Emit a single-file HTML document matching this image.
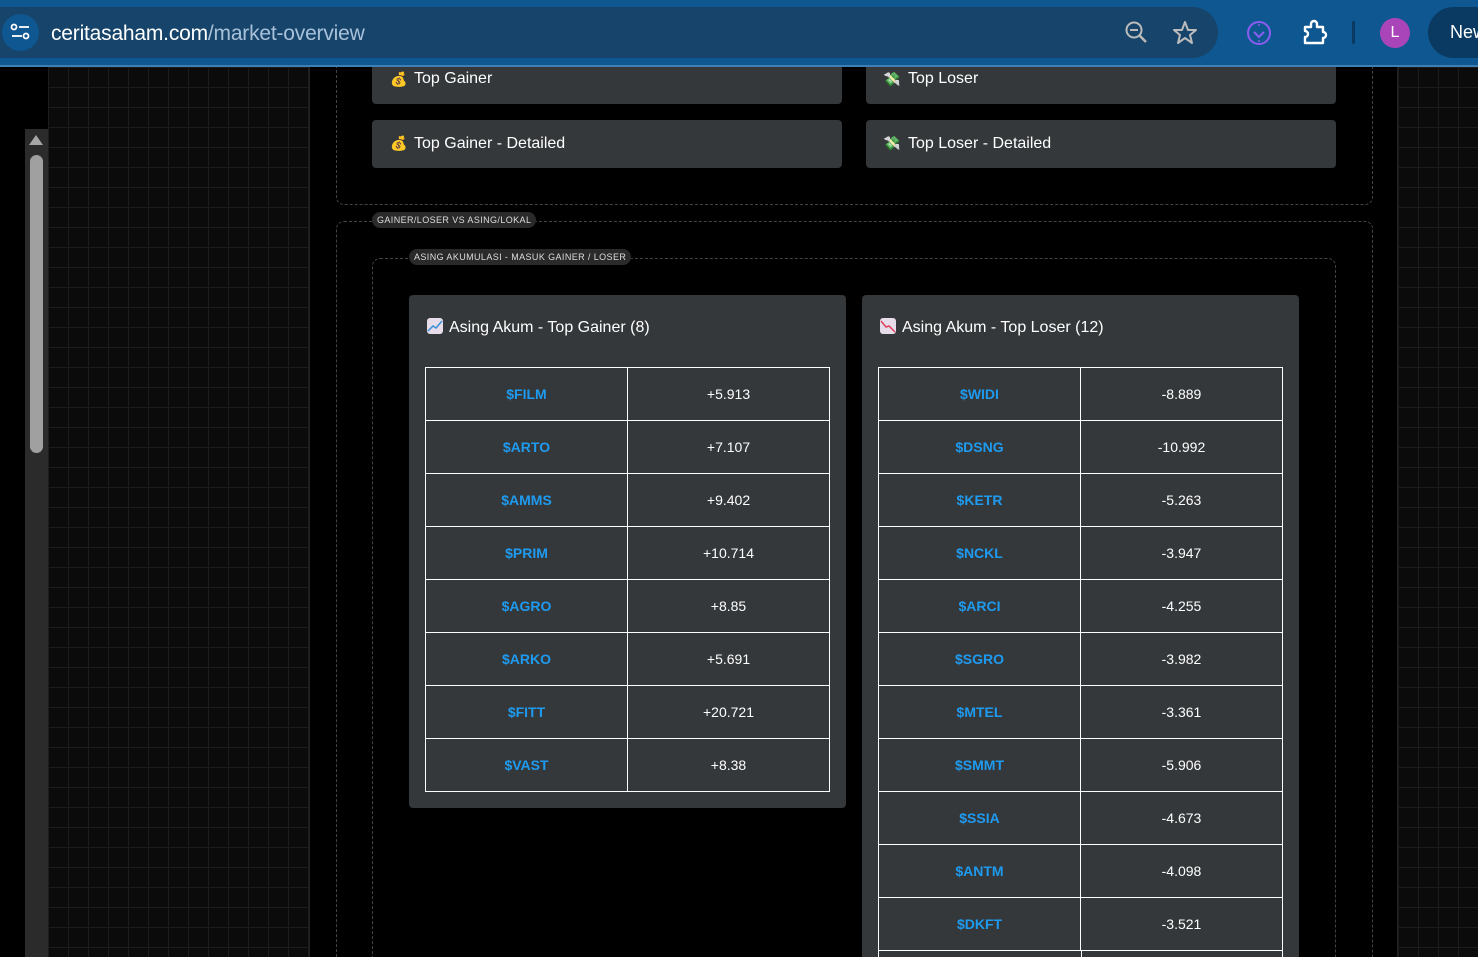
<!DOCTYPE html>
<html><head><meta charset="utf-8"><style>
*{margin:0;padding:0;box-sizing:border-box}
html,body{width:1478px;height:957px;overflow:hidden;background:#000}
body{font-family:"Liberation Sans",Arial,sans-serif}
#w{position:relative;width:1478px;height:957px;overflow:hidden}
.abs{position:absolute}
.bar{left:0;top:0;width:1478px;height:67px;background:#0f5790;border-bottom:2px solid #3f7fb4}
.pill{left:0;top:7px;width:1218px;height:51px;background:#16446b;border-radius:0 26px 26px 0}
.url{left:51px;top:22px;font-size:21px;color:#fff;letter-spacing:-0.2px}
.url span{color:#a9c1d8}
.grid{background-color:#0b0b0b;background-image:linear-gradient(#1c1c1c 1px,transparent 1px),linear-gradient(90deg,#1c1c1c 1px,transparent 1px);background-size:20px 20px}
.btn{background:#34383a;border-radius:4px;color:#fff;font-size:16px;padding-left:42px;line-height:48px}
.dash{border:1px dashed #444;border-radius:8px}
.leg{background:#2a2a2a;color:#ddd;font-size:9px;letter-spacing:.4px;border-radius:8px;height:16px;line-height:16px;padding:0 5px}
.card{background:#34383a;border-radius:4px}
.ttl{color:#fff;font-size:16px}
table{border-collapse:collapse;position:absolute}
td{border:1px solid #fff;height:53px;text-align:center;font-size:14px;color:#fff;width:50%}
td.t{color:#1e9bf0;font-weight:bold}
.ico{display:inline-block;width:16px;height:16px;border-radius:3px;background:#e6dcea;vertical-align:-2px;margin-right:6px;position:relative;overflow:hidden}
</style></head><body><div id="w">
<div class="abs grid" style="left:48px;top:67px;width:262px;height:890px;border-right:1px solid #222"></div>
<div class="abs grid" style="left:1397px;top:67px;width:81px;height:890px;border-left:1px solid #222"></div>
<div class="abs" style="left:25px;top:129px;width:23px;height:828px;background:#2b2b2b"></div>
<div class="abs" style="left:29px;top:135px;width:0;height:0;border-left:7px solid transparent;border-right:7px solid transparent;border-bottom:10px solid #a6a6a6"></div>
<div class="abs" style="left:30px;top:155px;width:13px;height:298px;background:#a0a0a0;border-radius:7px"></div>

<div class="abs dash" style="left:336px;top:67px;width:1037px;height:138px;border-top:none;border-radius:0 0 8px 8px"></div>
<div class="abs btn" style="left:372px;top:67px;width:470px;height:37px;line-height:24px;border-radius:0 0 4px 4px">Top Gainer</div>
<div class="abs" style="left:390px;top:71px;font-size:14px">💰</div>
<div class="abs btn" style="left:866px;top:67px;width:470px;height:37px;line-height:24px;border-radius:0 0 4px 4px">Top Loser</div>
<div class="abs" style="left:883px;top:71px;font-size:14px">💸</div>
<div class="abs btn" style="left:372px;top:120px;width:470px;height:48px;">Top Gainer - Detailed</div>
<div class="abs" style="left:390px;top:135px;font-size:14px">💰</div>
<div class="abs btn" style="left:866px;top:120px;width:470px;height:48px;">Top Loser - Detailed</div>
<div class="abs" style="left:883px;top:135px;font-size:14px">💸</div>

<div class="abs dash" style="left:336px;top:221px;width:1037px;height:736px;border-bottom:none;border-radius:8px 8px 0 0"></div>
<div class="abs leg" style="left:372px;top:212px">GAINER/LOSER VS ASING/LOKAL</div>
<div class="abs dash" style="left:372px;top:258px;width:964px;height:699px;border-bottom:none;border-radius:8px 8px 0 0"></div>
<div class="abs leg" style="left:409px;top:249px">ASING AKUMULASI - MASUK GAINER / LOSER</div>

<div class="abs card" style="left:409px;top:295px;width:437px;height:513px"></div>
<div class="abs ttl" style="left:427px;top:318px"><span class="ico"><svg width="16" height="16"><path d="M1 13 L6 8 L9 10 L15 3" stroke="#3a8fd8" stroke-width="1.5" fill="none"/></svg></span>Asing Akum - Top Gainer (8)</div>
<table style="left:425px;top:367px;width:405px">
<tr><td class="t">$FILM</td><td>+5.913</td></tr>
<tr><td class="t">$ARTO</td><td>+7.107</td></tr>
<tr><td class="t">$AMMS</td><td>+9.402</td></tr>
<tr><td class="t">$PRIM</td><td>+10.714</td></tr>
<tr><td class="t">$AGRO</td><td>+8.85</td></tr>
<tr><td class="t">$ARKO</td><td>+5.691</td></tr>
<tr><td class="t">$FITT</td><td>+20.721</td></tr>
<tr><td class="t">$VAST</td><td>+8.38</td></tr>
</table>

<div class="abs card" style="left:862px;top:295px;width:437px;height:662px;border-radius:4px 4px 0 0"></div>
<div class="abs ttl" style="left:880px;top:318px"><span class="ico"><svg width="16" height="16"><path d="M1 3 L6 9 L9 8 L15 14" stroke="#e0405a" stroke-width="1.5" fill="none"/></svg></span>Asing Akum - Top Loser (12)</div>
<table style="left:878px;top:367px;width:405px">
<tr><td class="t">$WIDI</td><td>-8.889</td></tr>
<tr><td class="t">$DSNG</td><td>-10.992</td></tr>
<tr><td class="t">$KETR</td><td>-5.263</td></tr>
<tr><td class="t">$NCKL</td><td>-3.947</td></tr>
<tr><td class="t">$ARCI</td><td>-4.255</td></tr>
<tr><td class="t">$SGRO</td><td>-3.982</td></tr>
<tr><td class="t">$MTEL</td><td>-3.361</td></tr>
<tr><td class="t">$SMMT</td><td>-5.906</td></tr>
<tr><td class="t">$SSIA</td><td>-4.673</td></tr>
<tr><td class="t">$ANTM</td><td>-4.098</td></tr>
<tr><td class="t">$DKFT</td><td>-3.521</td></tr>
</table>
<div class="abs" style="left:878px;top:950px;width:405px;height:7px;border:1px solid #fff;border-bottom:none"></div>
<div class="abs" style="left:1081px;top:950px;width:1px;height:7px;background:#fff"></div>

<div class="abs bar"></div>
<div class="abs pill"></div>
<div class="abs" style="left:2px;top:14px;width:37px;height:37px;border-radius:50%;background:#0f5790"></div>
<svg class="abs" style="left:9px;top:22px" width="24" height="22"><circle cx="5" cy="5" r="2.5" stroke="#fff" stroke-width="1.8" fill="none"/><line x1="10" y1="5" x2="20" y2="5" stroke="#fff" stroke-width="1.8"/><line x1="3" y1="14" x2="13" y2="14" stroke="#fff" stroke-width="1.8"/><circle cx="17" cy="14" r="2.5" stroke="#fff" stroke-width="1.8" fill="none"/></svg>
<div class="abs url">ceritasaham.com<span>/market-overview</span></div>
<svg class="abs" style="left:1124px;top:20px" width="26" height="26"><circle cx="10" cy="10" r="7.5" stroke="#bbb" stroke-width="2" fill="none"/><line x1="6" y1="10" x2="14" y2="10" stroke="#bbb" stroke-width="2"/><line x1="15.5" y1="15.5" x2="22" y2="22" stroke="#bbb" stroke-width="2.4"/></svg>
<svg class="abs" style="left:1172px;top:20px" width="26" height="26"><path d="M13 2 L16 10 L24 10 L18 15 L20 23 L13 18 L6 23 L8 15 L2 10 L10 10 Z" stroke="#bbb" stroke-width="2" fill="none" stroke-linejoin="round"/></svg>
<svg class="abs" style="left:1246px;top:20px" width="26" height="26"><circle cx="13" cy="13" r="11" stroke="#8a5cf0" stroke-width="2" fill="none"/><path d="M8 12 L13 17 L18 12" stroke="#8a5cf0" stroke-width="2" fill="none"/><circle cx="13" cy="5" r="1" fill="#8a5cf0"/><circle cx="13" cy="21" r="1" fill="#8a5cf0"/></svg>
<svg class="abs" style="left:1301px;top:19px" width="28" height="28"><path d="M4 8 H10 V5 a3 3 0 0 1 6 0 V8 H22 V13 a3 3 0 0 1 0 6 V24 H4 V18 a3 3 0 0 0 0 -6 Z" stroke="#fff" stroke-width="2.4" fill="none" stroke-linejoin="round"/></svg>
<div class="abs" style="left:1352px;top:21px;width:3px;height:23px;background:#0a3a62;border-radius:2px"></div>
<div class="abs" style="left:1380px;top:18px;width:30px;height:30px;border-radius:50%;background:#a944b9;color:#fff;font-size:16px;text-align:center;line-height:30px">L</div>
<div class="abs" style="left:1428px;top:7px;width:50px;height:51px;border-radius:26px 0 0 26px;background:#0a3a62;color:#fff;font-size:18px;line-height:51px;padding-left:22px;overflow:hidden;white-space:nowrap">New</div>
</div></body></html>
